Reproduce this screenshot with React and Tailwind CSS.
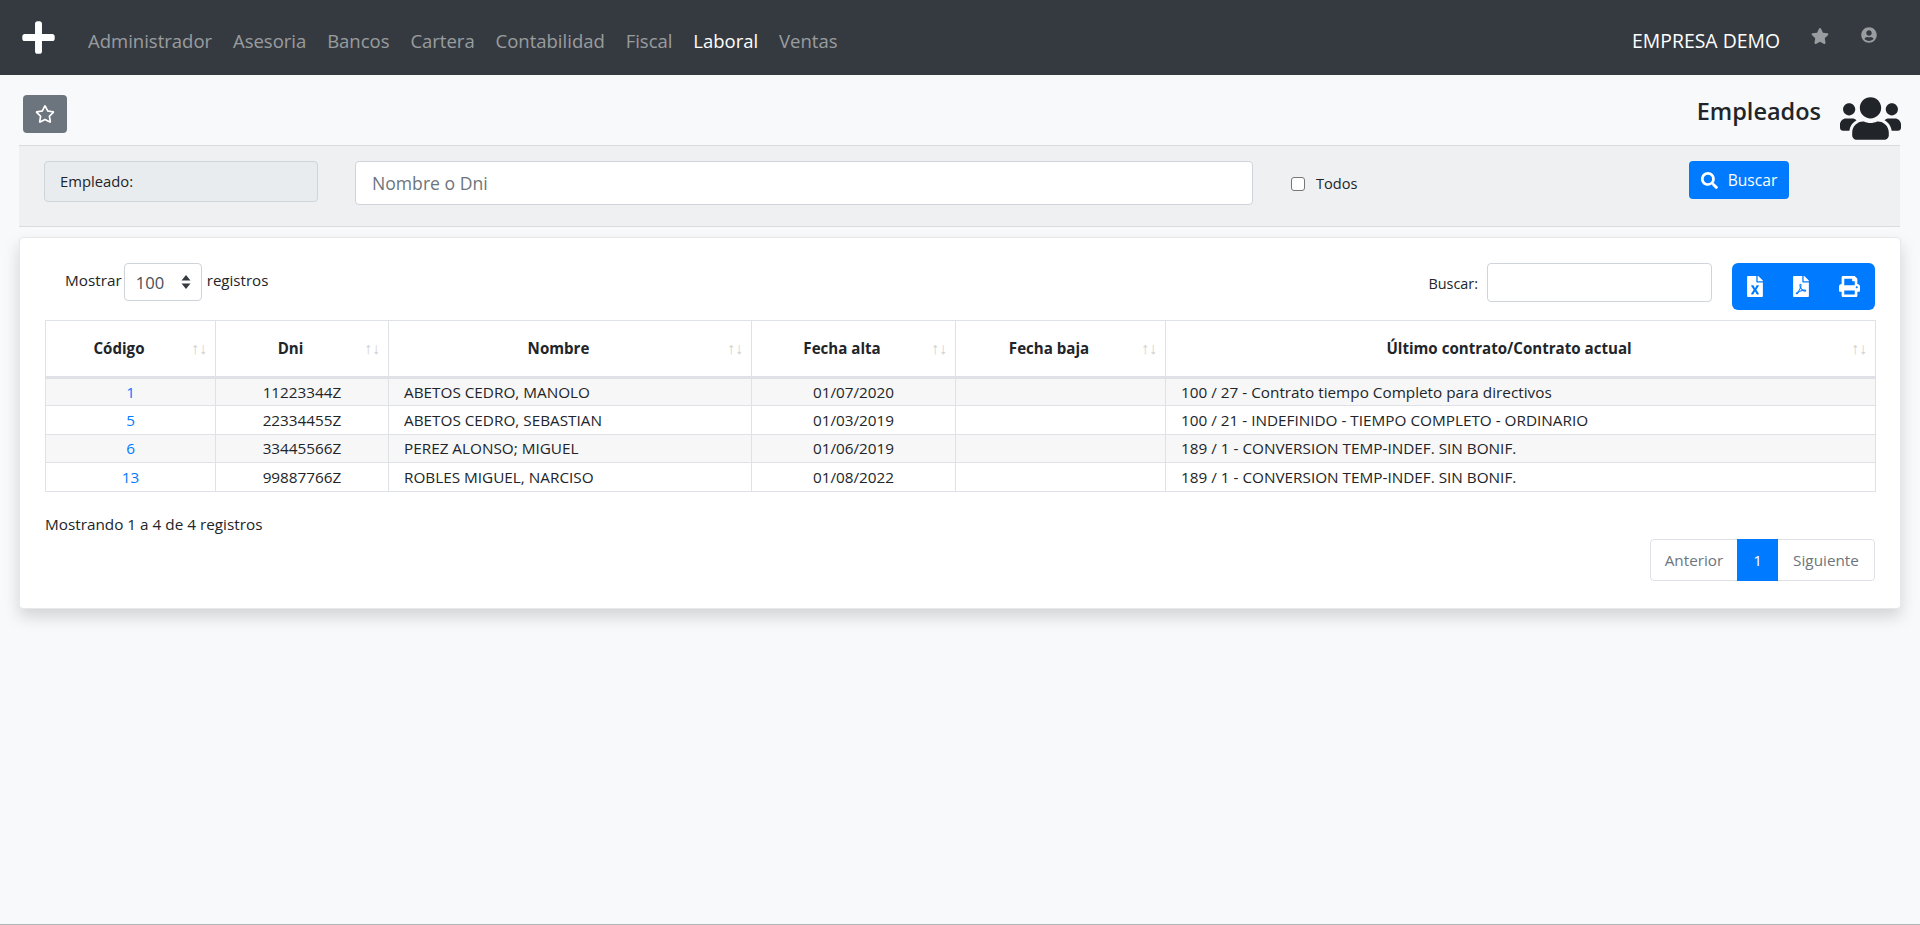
import React from "react";
import {
	FaFileExcel,
	FaFilePdf,
	FaPlus,
	FaPrint,
	FaRegStar,
	FaSearch,
	FaStar,
	FaUserCircle,
	FaUsers,
} from "react-icons/fa";

const menu = ["Administrador", "Asesoria", "Bancos", "Cartera", "Contabilidad", "Fiscal", "Laboral", "Ventas"];

const columns = [
	{ title: "Código", width: "w-[170px]" },
	{ title: "Dni", width: "w-[173px]" },
	{ title: "Nombre", width: "w-[363px]" },
	{ title: "Fecha alta", width: "w-[204px]" },
	{ title: "Fecha baja", width: "w-[210px]" },
	{ title: "Último contrato/Contrato actual", width: "w-[710px]" },
];

const rows = [
	{ id: 1, dni: "11223344Z", name: "ABETOS CEDRO, MANOLO", alta: "01/07/2020", contrato: "100 / 27 - Contrato tiempo Completo para directivos", h: "h-[28px]" },
	{ id: 5, dni: "22334455Z", name: "ABETOS CEDRO, SEBASTIAN", alta: "01/03/2019", contrato: "100 / 21 - INDEFINIDO - TIEMPO COMPLETO - ORDINARIO", h: "h-[29px]" },
	{ id: 6, dni: "33445566Z", name: "PEREZ ALONSO; MIGUEL", alta: "01/06/2019", contrato: "189 / 1 - CONVERSION TEMP-INDEF. SIN BONIF.", h: "h-[28px]" },
	{ id: 13, dni: "99887766Z", name: "ROBLES MIGUEL, NARCISO", alta: "01/08/2022", contrato: "189 / 1 - CONVERSION TEMP-INDEF. SIN BONIF.", h: "h-[29px]" },
];

function App() {
	return (
		<div className="min-h-[925px] bg-[#f8f9fa] border-b border-[#aeb6b6] text-[15.3px] leading-[21px] text-[#212529] font-['Open_Sans','Liberation_Sans',sans-serif]">
			{/* === Navbar === */}
			<nav className="h-[75px] bg-[#343a40] flex items-center pl-[20px] pr-[43px]">
				<FaPlus className="text-white w-[37px] h-[37px] mr-[8px]" />
				<div className="flex gap-[20.85px] ml-[23px] pt-[6px]">
					{menu.map((m) => (
						<span key={m} className={`text-[18.5px] ${m === "Laboral" ? "text-white" : "text-white/50"}`}>
							{m}
						</span>
					))}
				</div>
				<span className="ml-auto text-white text-[19.4px] pt-[6px]">EMPRESA DEMO</span>
				<FaStar className="text-white/50 w-[18px] h-[18px] ml-[31px] mb-[4px]" />
				<FaUserCircle className="text-white/50 w-[16px] h-[16px] ml-[32px] mb-[6px]" />
			</nav>

			{/* === Title row === */}
			<div className="h-[70px] flex pl-[23px] pr-[19px] pt-[20px]">
				<button className="w-[44px] h-[38px] bg-[#6c757d] rounded flex items-center justify-center">
					<FaRegStar className="text-white w-[20px] h-[20px]" />
				</button>
				<h4 className="ml-auto text-[23.5px] font-semibold leading-[32px]">Empleados</h4>
				<FaUsers className="w-[61px] h-[49px] ml-[19px] -mt-[1px]" />
			</div>

			{/* === Filter band === */}
			<div className="h-[82px] ml-[19px] w-[1881px] bg-[#eff0f2] border-y border-[#d9dbde] flex items-start pt-[15px]">
				<div className="ml-[25px] w-[274px] h-[41px] bg-[#e9ecef] border border-[#ced4da] rounded flex items-center px-[15px] text-[14.8px]">
					Empleado:
				</div>
				<input
					placeholder="Nombre o Dni"
					className="ml-[37px] w-[898px] h-[44px] bg-white border border-[#ced4da] rounded px-[16px] text-[17.6px] placeholder:text-[#6c757d]"
				/>
				<div className="ml-[38px] mt-[12px] w-[398px] flex items-center">
					<span className="w-[14px] h-[14px] bg-white border border-[#767676] rounded-[3px]"></span>
					<span className="ml-[11px] text-[14.6px]">Todos</span>
				</div>
				<button className="w-[100px] h-[38px] bg-[#007bff] text-white rounded flex items-center justify-center gap-[10px] text-[15.6px]">
					<FaSearch className="w-[17px] h-[17px]" />
					Buscar
				</button>
			</div>

			{/* === Table card === */}
			<div className="mt-[10px] ml-[19px] w-[1882px] h-[372px] bg-white border border-[#e6e8ea] rounded shadow-[0_8px_16px_rgba(0,0,0,0.15)] px-[25px] pt-[25px]">
				<div className="flex items-start h-[57px]">
					<div className="flex items-center pl-[20px] h-[36px]">
						<span className="mb-[2px]">Mostrar</span>
						<div className="ml-[2px] w-[78px] h-[38px] mt-[2px] border border-[#ced4da] rounded flex items-center justify-between pl-[11px] pr-[10px] text-[16.6px] text-[#495057]">
							100
							<svg width="10" height="14" viewBox="0 0 10 14" className="text-[#343a40]">
								<path d="M5 0l4.5 5.5h-9zM5 14l4.5-5.5h-9z" fill="currentColor" />
							</svg>
						</div>
						<span className="ml-[5px] mb-[2px] text-[15.1px]">registros</span>
					</div>
					<span className="ml-auto mt-[10px] text-[14.4px]">Buscar:</span>
					<input className="ml-[9px] w-[225px] h-[39px] bg-white border border-[#ced4da] rounded" />
					<div className="ml-[20px] w-[143px] h-[47px] bg-[#007bff] rounded-md flex items-center gap-[30px] pl-[15px] text-white">
						<FaFileExcel className="w-[16px] h-[21px]" />
						<FaFilePdf className="w-[16px] h-[21px]" />
						<FaPrint className="w-[21px] h-[21px]" />
					</div>
				</div>

				<table className="w-[1830px] table-fixed border-collapse border border-[#dee2e6]">
					<thead>
						<tr className="h-[57px] border-b-[3px] border-[#dee2e6]">
							{columns.map((c) => (
								<th key={c.title} className={`${c.width} pr-[44px] pl-[12px] border-x border-[#dee2e6] font-bold text-center text-[15.1px]`}>
									<div className="flex items-center">
										<span className="flex-1 pr-[11px]">{c.title}</span>
										<span className="text-[#cfcfcf] font-normal text-[16px] -mr-[36px]">↑↓</span>
									</div>
								</th>
							))}
						</tr>
					</thead>
					<tbody>
						{rows.map((r, i) => (
							<tr key={r.id} className={`${r.h} border-b border-[#dee2e6] ${i % 2 === 0 ? "bg-[#f7f7f8]" : "bg-white"}`}>
								<td className="border-x border-[#dee2e6] text-center text-[#007bff]">{r.id}</td>
								<td className="border-x border-[#dee2e6] text-center">{r.dni}</td>
								<td className="border-x border-[#dee2e6] px-[15px]">{r.name}</td>
								<td className="border-x border-[#dee2e6] text-center">{r.alta}</td>
								<td className="border-x border-[#dee2e6]"></td>
								<td className="border-x border-[#dee2e6] px-[15px]">{r.contrato}</td>
							</tr>
						))}
					</tbody>
				</table>

				<div className="mt-[22px]">Mostrando 1 a 4 de 4 registros</div>
				<div className="flex justify-end mt-[4px]">
					<div className="flex h-[42px] border border-[#dee2e6] rounded text-[#6c757d] bg-white">
						<span className="w-[86px] flex items-center justify-center">Anterior</span>
						<span className="w-[41px] -my-px flex items-center justify-center bg-[#007bff] text-white">1</span>
						<span className="w-[96px] flex items-center justify-center">Siguiente</span>
					</div>
				</div>
			</div>
		</div>
	);
}

export default App;
